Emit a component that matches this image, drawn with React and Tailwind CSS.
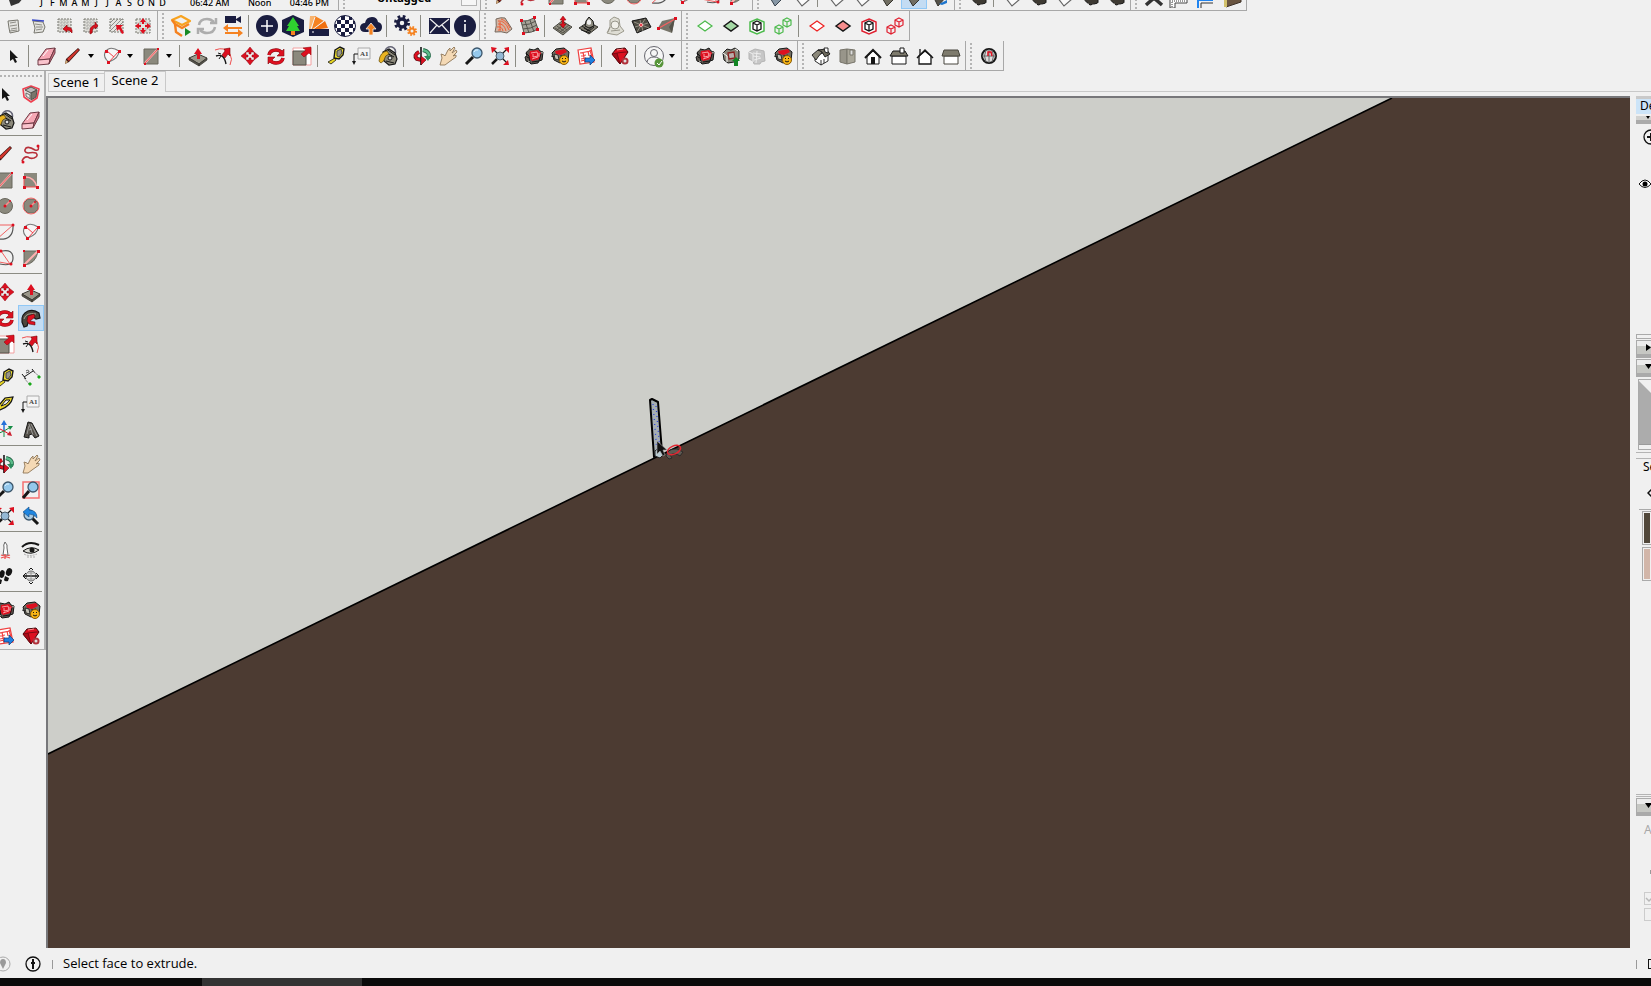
import clsx from 'clsx';

const RED = '#dd1020';
const INK = '#161616';
const STONE = '#8b897d';
const NAVY = '#1a1d40';
const ORANGE = '#f58220';
const GREEN = '#4cba4c';

const cubeLines = 'M12 7l4 2v6l-4 2-4-2V9zM8 9l4 2 4-2M12 11v6';

const smallCubes = (color) => (
  <g fill="none" stroke={color} strokeWidth="1.200">
    <path d="M8 11l4 2v5l-4 2-4-2v-5zM4 13l4 2 4-2M8 15v5" />
    <path d="M16 4l4 2v5l-4 2-4-2V6zM12 6l4 2 4-2M16 8v5" />
  </g>
);

const ruby = (
  <g>
    <path d="M4 9l3-4 5 1 4-2 2 3 3 1-1 8-3 1-1 2-7 1-2-2-3-1-1-4 2-1z" fill="#5c5750" stroke={INK} />
    <path d="M8 7l8-1 3 3-1 6-8 2-3-3z" fill={RED} />
    <path d="M9 9l6-1 1 4-5 1v-3M10 15l6-2M17 9v4" stroke="#ffc4c4" strokeWidth=".8" fill="none" />
    <path d="M4 9l3 3 1 7M10 18l7-1 2-7M5 13l2 1" stroke={INK} fill="none" />
    <path d="M5 7l2-2M19 8l2 1M6 17l2 1" stroke="#b5b2a8" fill="none" />
  </g>
);

const smiley = (
  <g>
    <circle cx="16" cy="16" r="4.500" fill="#f8b516" stroke="#8a5a00" />
    <path d="M14 17q2 2 4 0" fill="none" stroke={INK} />
    <path d="M14 14h1v1h-1zM17 14h1v1h-1z" fill={INK} />
  </g>
);

const icons = {
  page: (
    <g stroke="#77766e" fill="#e4e4e0">
      <path d="M7 7l10-1 1 11-9 2-1-5z" />
      <path d="M9 9l6-1M9 12l7-1M10 15l6-1M9 17l7-1" strokeWidth=".8" />
    </g>
  ),
  pageBlue: (
    <g stroke="#77766e" fill="#e4e4e0">
      <path d="M6 7l10 1 2 5-2 5-9 1 1-5z" />
      <path d="M8 10l7 1M9 13l7 0M9 16l6-1" strokeWidth=".8" />
      <path d="M5 6l12 1" stroke="#3848c8" strokeWidth="1.500" />
    </g>
  ),
  hatchLeft: (
    <g>
      <path d="M5 5h13v13H5z" fill="#ddddd7" stroke="#77766e" strokeDasharray="2 1" />
      <path d="M5 8h13M5 11h13M5 14h13M8 5v13M11 5v13M14 5v13" stroke="#999" strokeWidth=".7" strokeDasharray="2 1" />
      <path d="M19 19q1-6-5-6v-2l-4 4 4 3v-2q3 0 5 3z" fill={RED} stroke="#800" strokeWidth=".6" />
    </g>
  ),
  hatchRight: (
    <g>
      <path d="M5 5h13v13H5z" fill="#ddddd7" stroke="#77766e" strokeDasharray="2 1" />
      <path d="M5 8h13M5 11h13M5 14h13M8 5v13M11 5v13M14 5v13" stroke="#999" strokeWidth=".7" strokeDasharray="2 1" />
      <path d="M11 20q-1-8 5-9V8l3 4-3 3v-2q-3 1-3 6z" fill={RED} stroke="#800" strokeWidth=".6" />
    </g>
  ),
  hatchDiagonal: (
    <g>
      <path d="M5 5h13v13H5z" fill="#e6e6e1" stroke="#77766e" strokeDasharray="2 1" />
      <path d="M5 9l4-4M5 13l8-8M5 17l12-12M8 18L18 8" stroke="#777" strokeWidth=".8" />
      <path d="M17 20l-3-5-2 2-1-6h7l-2 2 3 6z" fill={RED} />
    </g>
  ),
  hatchOut: (
    <g>
      <path d="M5 5h14v14H5z" fill="#e6e6e1" stroke="#77766e" strokeDasharray="2 1" />
      <path d="M5 9h14M5 15h14M9 5v14M15 5v14" stroke="#aaa" strokeWidth=".7" />
      <path d="M12 4l3 4h-2v2h-2V8H9zM12 20l3-4h-2v-2h-2v2H9zM4 12l4-3v2h2v2H8v2zM20 12l-4-3v2h-2v2h2v2z" fill={RED} />
    </g>
  ),
  hexPlay: (
    <g>
      <path d="M3 6l9-4 9 5-8 4z" fill="none" stroke="#f7a21f" strokeWidth="2.200" strokeLinejoin="round" />
      <path d="M3 6l3 4 7 4 7-4M6 10l1 8 6 4" fill="none" stroke={ORANGE} strokeWidth="2.400" strokeLinejoin="round" />
      <path d="M16 14l6 4-6 4z" fill="#178a25" />
    </g>
  ),
  sync: (
    <g fill="none" stroke="#adadad" strokeWidth="2.500">
      <path d="M4 11q1-6 8-6 4 0 7 3M20 13q-1 6-8 6-4 0-7-3" />
      <path d="M21 4v5h-6M3 20v-5h6" />
    </g>
  ),
  cameraSwap: (
    <g>
      <path d="M4 2h11v7H4zM15 5l5-3v7l-5-3z" fill={NAVY} />
      <path d="M2 14l5-4v3h14v2H7v3zM22 19l-5-4v3H4v2h13v3z" fill={ORANGE} />
    </g>
  ),
  plusDisc: (
    <g>
      <circle cx="12" cy="12" r="11" fill={NAVY} />
      <path d="M12 6v12M6 12h12" stroke="#fff" strokeWidth="1.500" />
    </g>
  ),
  treeHex: (
    <g>
      <path d="M12 1l11 5v12l-11 5-11-5V6z" fill={NAVY} />
      <path d="M12 3l6 9h-2l3 5H5l3-5H6z" fill="#2fd22f" />
      <path d="M10 17h4v4h-4z" fill={ORANGE} />
    </g>
  ),
  swatches: (
    <g>
      <path d="M3 2h5l3 13H2z" fill="#f9b36d" />
      <path d="M8 2l9 5-12 9z" fill={ORANGE} />
      <path d="M18 7l3 7-16 2z" fill="#f07010" />
      <path d="M8 3l-4 12M17 7L5 16" stroke="#f0f0f0" />
      <path d="M2 15h20v7H2z" fill={NAVY} />
      <path d="M5 18h2" stroke="#fff" />
    </g>
  ),
  checkerBall: (
    <g>
      <circle cx="12" cy="12" r="10.500" fill="#fff" stroke={NAVY} />
      <path
        d="M8 2h4v4H8zM16 3h3v3h-3zM4 6h4v4H4zM12 6h4v4h-4zM8 10h4v4H8zM16 10h4v4h-4zM4 14h4v4H4zM12 14h4v4h-4zM8 18h4v4H8zM16 18h3v2h-3zM2 10h2v4H2zM20 7h2v3h-2zM20 14h2v3h-2z"
        fill={NAVY}
      />
    </g>
  ),
  cloudUp: (
    <g>
      <path d="M6 18q-5 0-5-5 1-4 5-4 1-6 7-6 5 0 6 5 4 1 4 5 0 5-5 5z" fill={NAVY} />
      <path d="M12 9l5 6h-3v6h-4v-6H7z" fill={ORANGE} stroke="#f0f0f0" strokeWidth=".8" />
    </g>
  ),
  gears: (
    <g fill="none">
      <circle cx="9" cy="9" r="4" stroke={NAVY} strokeWidth="3.500" />
      <circle cx="9" cy="9" r="6.500" stroke={NAVY} strokeWidth="3" strokeDasharray="2.600 2.500" />
      <circle cx="19" cy="17" r="2.500" stroke={ORANGE} strokeWidth="2" />
      <circle cx="19" cy="17" r="4" stroke={ORANGE} strokeWidth="2" strokeDasharray="1.600 1.540" />
    </g>
  ),
  mail: (
    <g>
      <path d="M2 4h21v16H2z" fill={NAVY} />
      <path d="M3 5l9 8 10-8M3 19l7-8M22 19l-7-8" fill="none" stroke="#f0f0f0" strokeWidth="1.200" />
    </g>
  ),
  infoDisc: (
    <g>
      <circle cx="12" cy="12" r="11" fill={NAVY} />
      <path d="M12 10v8M12 6v2" stroke="#fff" strokeWidth="1.600" />
    </g>
  ),
  contours: (
    <g>
      <path d="M5 5q5-2 9-1l7 11-5 4q-6-2-12-1 2-6 1-13z" fill="#d3b5a3" stroke="#76695e" />
      <path d="M7 7q7-1 11 9M7 10q6-1 8 7M6 13q5-1 6 4M10 5q6 2 9 9M7 16h3M9 8v8" fill="none" stroke="#f0562c" strokeWidth=".9" />
    </g>
  ),
  terrainGrid: (
    <g>
      <path d="M4 7q6 1 13-3l4 11q-6 4-14 4z" fill="#a5a398" stroke="#55544c" />
      <path d="M8 7l4 12M13 6l4 12M5 11q8 0 14-4M6 15q8 0 14-4" stroke="#55544c" fill="none" />
      <path d="M3 5h3v3H3zM16 2h3v3h-3zM5 18h3v3H5zM19 14h3v3h-3z" fill={RED} />
    </g>
  ),
  smoove: (
    <g>
      <path d="M2 14l9-7 10 6-9 8z" fill="#918e80" stroke="#47463f" />
      <path d="M4 14l8 5 7-6M6 12l8 6M8 10l8 6M15 9l-9 7M18 11l-9 7" fill="none" stroke="#47463f" strokeWidth=".8" />
      <path d="M12 2l3 4h-2v4h2l-3 4-3-4h2V6H9z" fill={RED} stroke="#800" strokeWidth=".5" />
    </g>
  ),
  stamp: (
    <g>
      <path d="M2 14l9-6 10 5-9 7z" fill="#7d7a6d" stroke="#35342e" />
      <path d="M7 14l5 3 5-4M4 16l9 3M5 12l9 6M17 11l-8 7" fill="none" stroke={INK} strokeWidth=".9" />
      <path d="M8 12l1-5 3-4 4 4 1 5-5 2z" fill="#8b897d" stroke={INK} />
      <path d="M10 10V7l2-2 2 2v3l-2 1z" fill="#eee" />
    </g>
  ),
  drape: (
    <g>
      <path d="M4 19l3-6V6l4-3 5 2 1 7 4 5-7 4-6-1z" fill="#deddd4" stroke="#9b998c" />
      <circle cx="12" cy="11" r="4" fill="#f0efe9" stroke="#98968a" />
      <path d="M8 17l9-1M7 13l-2 5" stroke="#98968a" />
    </g>
  ),
  addDetail: (
    <g>
      <path d="M3 7l14-3 5 9-14 6z" fill="#4e4b42" stroke={INK} />
      <path d="M5 8l15 6M8 18l8-13M6 13l13-4M11 6l3 11" stroke="#a5a294" strokeWidth=".8" />
      <circle cx="12" cy="11" r="1.500" fill={RED} stroke="#fbb" />
    </g>
  ),
  flipEdge: (
    <g>
      <path d="M7 7l13-3-3 15L3 14z" fill="#77756a" />
      <path d="M20 4l-3 15-3-6z" fill="#55534a" />
      <path d="M4 14L20 5" stroke="#f56060" strokeWidth="1.300" />
      <path d="M2 13h3v3H2zM19 3h3v3h-3z" fill={RED} />
    </g>
  ),
  diamondGreen: <path d="M5 12l7-5 7 5-7 5z" fill="#fff" stroke={GREEN} strokeWidth="1.200" />,
  diamondGreenFill: <path d="M5 12l7-5 7 5-7 5z" fill="#a4d8a4" stroke={INK} strokeWidth="1.500" />,
  cubeGreen: (
    <g fill="none">
      <path d="M12 5l7 3v9l-7 3-7-3V8z" stroke={GREEN} strokeWidth="1.500" fill="#fff" />
      <path d={cubeLines} stroke={INK} strokeWidth="1.300" />
    </g>
  ),
  cubesGreen: smallCubes(GREEN),
  diamondRed: <path d="M5 12l7-5 7 5-7 5z" fill="#fff" stroke="#ee2222" strokeWidth="1.200" />,
  diamondRedFill: <path d="M5 12l7-5 7 5-7 5z" fill="#f58d8d" stroke={INK} strokeWidth="1.500" />,
  cubeRed: (
    <g fill="none">
      <path d="M12 5l7 3v9l-7 3-7-3V8z" stroke="#e02030" strokeWidth="1.500" fill="#fff" />
      <path d={cubeLines} stroke={INK} strokeWidth="1.300" />
    </g>
  ),
  cubesRed: smallCubes('#e02030'),
  cursor: <path d="M9 6v11l3-2 2 4 2-1-2-4h3z" fill={INK} />,
  eraser: (
    <g strokeLinejoin="round">
      <path d="M3 16l8-11 9-1-5 11z" fill="#f6a8b5" stroke="#6e3a44" />
      <path d="M3 16l12-1-1 5-11 1z" fill="#f9c3cc" stroke="#6e3a44" />
      <path d="M15 15l5-11v5l-6 11z" fill="#cf7486" stroke="#6e3a44" />
      <path d="M8 12l5-6" stroke="#fff" />
    </g>
  ),
  pencil: (
    <g>
      <path d="M4 20l1-5L17 4l2 2L8 18z" fill="#3a1512" />
      <path d="M6 15L17 5l1 1L8 17z" fill="#d4352c" />
      <path d="M4 20l1-4 2 2z" fill="#d8b078" />
    </g>
  ),
  arc: (
    <g>
      <path d="M9 18Q3 14 5 8 10 1 19 7q0 7-10 11z" stroke="#777" strokeWidth="1.100" fill="#f6f6f6" />
      <path d="M9 18L19 7M7 7l7 6" stroke="#f04048" fill="none" />
      <path d="M18 6h3v3h-3zM7 17h3v3H7zM5 6h3v3H5z" fill={RED} />
    </g>
  ),
  rectangle: (
    <g>
      <path d="M5 5h14v15H5z" fill={STONE} stroke="#69675d" />
      <path d="M6 19L18 6" stroke="#ffb0b0" strokeWidth="2" />
      <path d="M6 19L18 6" stroke="#e04a4a" strokeWidth=".8" />
      <path d="M5 19h2v2H5zM18 4h2v2h-2z" fill={RED} />
    </g>
  ),
  pushPull: (
    <g>
      <path d="M3 14l9-4 9 4-8 6z" fill="#9a978a" stroke="#3c3b35" />
      <path d="M3 14v2l10 6v-2zM13 20v2l8-6v-2z" fill="#55534a" stroke="#33322c" strokeWidth=".7" />
      <path d="M12 4l4 6h-2v5h-3v-5H8z" fill={RED} />
    </g>
  ),
  offset: (
    <g fill="none">
      <path d="M3 6q10-4 15 4 3 5 0 11" stroke="#ef5050" />
      <path d="M4 12q8-3 10 8" stroke={INK} strokeWidth="1.400" />
      <path d="M6 9l3 1M9 12l-2 3" stroke={INK} />
      <path d="M18 4l-6 1 1 2-3 4 3 3 3-4 2 2z" fill={RED} stroke="#700" strokeWidth=".6" />
    </g>
  ),
  move: (
    <g fill={RED} stroke="#8d0b14" strokeWidth=".5">
      <path d="M12 3l4 5h-3v2h-2V8H8z" />
      <path d="M12 21l4-5h-3v-2h-2v2H8z" />
      <path d="M3 12l5-4v3h2v2H8v3z" />
      <path d="M21 12l-5-4v3h-2v2h2v3z" />
    </g>
  ),
  rotate: (
    <g>
      <path d="M5 11q1-5 7-5 4 0 6 3M19 14q-1 5-7 5-4 0-6-3" fill="none" stroke="#800d12" strokeWidth="3.600" />
      <path d="M20 5v7h-7zM4 20v-7h7z" fill={RED} stroke="#800d12" strokeWidth=".6" />
      <path d="M5 11q1-5 7-5 4 0 6 3M19 14q-1 5-7 5-4 0-6-3" fill="none" stroke={RED} strokeWidth="2.600" />
    </g>
  ),
  scale: (
    <g>
      <path d="M3 4h18v17H3z" fill="#fff" stroke="#f2a0a0" />
      <path d="M3 7h13v14H3z" fill={STONE} stroke="#55534a" />
      <path d="M21 3v8l-2-2-5 4-3-3 5-4-3-2z" fill={RED} stroke="#800" strokeWidth=".5" />
    </g>
  ),
  tape: (
    <g>
      <path d="M4 18l7-4 1 2-5 4z" fill="#e6d422" stroke={INK} strokeWidth=".8" />
      <path d="M11 6l5-3 4 2-1 6-4 4-5-1z" fill="#f1e02b" stroke={INK} strokeWidth="1.400" />
      <path d="M13 7l4-2 1 4-3 4-2-1z" fill="#98968a" stroke="#444" />
    </g>
  ),
  label: (
    <g>
      <path d="M8 4h12v11H8z" fill="#f5f5f5" stroke="#aaa" />
      <text x="10" y="12" fontSize="7" fontWeight="bold" fontFamily="Liberation Serif, serif" fill="#444">A1</text>
      <path d="M8 10H4v8" fill="none" stroke={INK} />
      <path d="M2 17h4l-2 4z" fill={INK} />
    </g>
  ),
  paint: (
    <g>
      <path d="M9 7q2-5 7-4 5 2 3 8" fill="none" stroke="#667" strokeWidth="1.500" />
      <path d="M7 8l6-3 6 4 2 6-2 5-6 1-5-4z" fill="#8c897b" stroke={INK} strokeWidth="1.200" />
      <path d="M9 8l9 5M12 6l7 5M10 17l8 2" stroke={INK} />
      <path d="M11 7q-7 1-8 10 2 4 5-1 1-5 5-6z" fill="#eab422" stroke="#5b4300" strokeWidth=".7" />
      <circle cx="14" cy="14" r="2" fill="#ddd" stroke={INK} />
    </g>
  ),
  orbit: (
    <g fill="none">
      <path d="M9 8q-6 3-2 7l5 1" stroke="#5a0c12" strokeWidth="4" />
      <path d="M9 8q-6 3-2 7l5 1" stroke={RED} strokeWidth="2.600" />
      <path d="M13 6q8 2 5 8" stroke="#1d5c3e" strokeWidth="4" />
      <path d="M13 6q8 2 5 8" stroke="#5bbd8b" strokeWidth="2.400" />
      <path d="M11 3v18" stroke={INK} strokeWidth="1.600" />
      <path d="M11 12l5 4-5 5z" fill={RED} stroke="#5a0c12" strokeWidth=".6" />
      <path d="M14 12h7l-3 5z" fill="#2b8c5c" />
    </g>
  ),
  hand: (
    <path
      d="M4 21l2-7-1-4 3 1 1 1 3-6 2-2v3l4-4 1 1-3 5 4-3 1 2-4 4 3-1v2l-7 5-4 3z"
      fill="#f4d9b5"
      stroke="#8f7657"
      strokeWidth=".9"
      strokeLinejoin="round"
    />
  ),
  zoom: (
    <g>
      <path d="M4 20l7-7" stroke={INK} strokeWidth="3" />
      <circle cx="15" cy="9" r="5" fill="#94c8ec" stroke="#3c566b" strokeWidth="1.300" />
      <path d="M12 8q1-3 4-2" stroke="#e5f5ff" fill="none" />
    </g>
  ),
  zoomExtents: (
    <g>
      <path d="M5 5l5 5M19 5l-5 5M19 19l-4-4" stroke={INK} strokeWidth="1.200" />
      <path d="M4 20l5-5" stroke={INK} strokeWidth="2.500" />
      <circle cx="12" cy="12" r="4" fill="#94b8d4" stroke="#4d5d6b" />
      <path d="M3 3l6 1-5 5zM21 3v6l-5-5zM21 21h-6l5-5z" fill={RED} />
    </g>
  ),
  zoomWindow: (
    <g>
      <path d="M4 4h16v16H4z" fill="none" stroke="#f47070" strokeWidth="1.500" />
      <path d="M4 20l6-7" stroke={INK} strokeWidth="3" />
      <circle cx="14" cy="9" r="5" fill="#94c8ec" stroke="#3c566b" strokeWidth="1.300" />
    </g>
  ),
  zoomPrevious: (
    <g>
      <path d="M13 14l6 6" stroke={INK} strokeWidth="3" />
      <circle cx="10" cy="11" r="5" fill="#a9cbe2" stroke="#3c566b" strokeWidth="1.300" />
      <path d="M4 8l6-5v3q8 0 8 8-3-4-8-4v3z" fill="#1f86e0" stroke="#104a85" strokeWidth=".6" />
    </g>
  ),
  ruby,
  rubySmile: (
    <g>
      <path d="M4 9l4-4 8-1 5 4-1 8-8 3-6-3z" fill="#716d62" stroke={INK} />
      <path d="M7 7l10-2 2 3-6 3-5-1z" fill={RED} />
      <path d="M6 10l4 1 1 5-4-1zM3 12l3 1M12 12l5-1" fill="#c4c1b6" stroke={INK} strokeWidth=".8" />
      {smiley}
    </g>
  ),
  layoutSend: (
    <g>
      <path d="M4 6l13-2 3 14-14 2z" fill="#fff" stroke="#ef4040" strokeWidth="1.200" />
      <path d="M6 9l11-2M7 12l5-1M7 15l5-1M9 8l2 11M14 7l1 5M16 6l2 7M7 17l4-1" stroke="#ef4040" strokeWidth="1.200" />
      <path d="M11 14h5v-3l5 5-5 5v-3h-5z" fill="#1f7fe0" stroke="#0d3a77" strokeWidth=".7" />
    </g>
  ),
  gem: (
    <g>
      <path d="M4 10l4-5 9-1 3 4-8 12z" fill={RED} stroke="#3d0508" />
      <path d="M4 10l5-1 3 11zM9 9l8-1 3 0" stroke="#6a0810" strokeWidth=".8" fill="#a80c18" />
      <path d="M9 6l6-1" stroke="#ff8b8b" />
      <circle cx="17" cy="17" r="2.500" fill="#ddd" stroke="#b1303a" strokeWidth="2" />
    </g>
  ),
  account: (
    <g>
      <circle cx="12" cy="12" r="9.500" fill="#f6f6f6" stroke="#66666e" />
      <circle cx="12" cy="9" r="3.500" fill="none" stroke="#66666e" />
      <path d="M5 18q1-5 7-5t7 5" fill="none" stroke="#66666e" />
      <circle cx="17" cy="19" r="4.500" fill="#57953a" />
      <path d="M15 19l2 2 3-4" stroke="#fff" fill="none" />
    </g>
  ),
  rubyUp: (
    <g>
      <path d="M4 9l4-4 4 1 4-2 4 3v8l-5 3-6 1-4-3z" fill="#8b877b" stroke={INK} />
      <path d="M9 9l6-1 1 6-6 1z" fill="#b9adab" stroke="#8a2020" strokeWidth="1.300" />
      <path d="M4 9l4 3v6M16 5l3 2" stroke="#fff" fill="none" />
      <path d="M17 13l4 4h-2v5h-4v-5h-2z" fill="#118522" />
    </g>
  ),
  rubyOff: (
    <g fill="#c6c6c6" stroke="#b4b4b4">
      <path d="M4 8l6-3 9 2 1 10-4 1-1 2-6 0-1-3-4-2z" />
      <path d="M8 9l8 1M8 12l7 1M9 16l7-2M12 7l-1 12M4 8l4 2v8" stroke="#eee" fill="none" />
    </g>
  ),
  isoHouse: (
    <g stroke={INK} strokeWidth=".9">
      <path d="M6 12v5l6 4 7-4v-6l-5-2z" fill="#fff" />
      <path d="M3 11l6-5 5 1-5 6-2 3z" fill="#8a8779" />
      <path d="M9 6l8-1 4 5-5 3-3-5z" fill="#6c695c" />
      <path d="M15 4h4v5l-3-1z" fill="#fff" />
      <path d="M12 16v5M15 15v4" fill="none" />
    </g>
  ),
  topHouse: (
    <g stroke="#77746a">
      <path d="M5 6l7-1v15l-7-2z" fill="#98958a" />
      <path d="M12 5l8 1v12l-8 2z" fill="#aaa79a" />
      <path d="M15 6h3v5h-3z" fill="#ddd" />
    </g>
  ),
  frontHouse: (
    <g>
      <path d="M6 12v8h12v-8l-6-5z" fill="#fff" stroke={INK} />
      <path d="M4 14l8-8 8 8" fill="none" stroke={INK} strokeWidth="2" />
      <path d="M10 13h4v7h-4z" fill={INK} />
    </g>
  ),
  rightHouse: (
    <g stroke={INK}>
      <path d="M5 12h14v8H5z" fill="#fff" />
      <path d="M6 7h12l3 5H3z" fill="#7e7b6d" />
      <path d="M13 4h4v5h-4z" fill="#fff" />
    </g>
  ),
  backHouse: (
    <g>
      <path d="M7 5v6" stroke={INK} strokeWidth="1.300" />
      <path d="M6 12v8h12v-8l-6-5z" fill="#fff" stroke={INK} strokeWidth="1.300" />
      <path d="M4 14l8-8 8 8" fill="none" stroke={INK} strokeWidth="1.500" />
    </g>
  ),
  leftHouse: (
    <g stroke="#47453c">
      <path d="M5 12h14v8H5z" fill="#fff" />
      <path d="M5 6h14l2 6H3z" fill="#7e7b6d" />
    </g>
  ),
  globe: (
    <g>
      <circle cx="12" cy="12" r="7" fill="#ddd" stroke={INK} strokeWidth="2" />
      <path d="M5 12h14M12 5v14M9 6q-3 6 0 12M15 6q3 6 0 12" stroke="#666" fill="none" />
      <path d="M11 12V8h3l1 4" stroke={RED} strokeWidth="1.500" fill="none" />
    </g>
  ),
  component: (
    <g>
      <path d="M4 7l8-3 8 3-2 9-6 4-7-5z" fill="#ddd" stroke="#f04050" strokeWidth="1.600" strokeLinejoin="round" />
      <path d="M6 8l6 3 6-3-6-3z" fill="#bbb" stroke="#55534c" />
      <path d="M12 11v7l5-3 1-7z" fill="#79766b" stroke="#55534c" />
      <path d="M7 11l4 2v4l-4-3z" fill="#e8e8e8" stroke="#55534c" strokeWidth=".8" />
    </g>
  ),
  freehand: (
    <g>
      <path d="M19 4q2 5-3 4-6-4-9-2-3 4 2 5 5-1 8 0 3 3-2 5-4 1-6-1-4-1-6 4" fill="none" stroke="#b8303a" strokeWidth="1.600" />
      <circle cx="19" cy="4" r="1.500" fill={RED} />
      <circle cx="4" cy="20" r="1.500" fill={RED} />
    </g>
  ),
  rotatedRectangle: (
    <g>
      <path d="M5 5h13v14H5z" fill={STONE} />
      <path d="M5 9q10-1 13 10" fill="none" stroke="#ffb0b0" strokeWidth="1.500" />
      <path d="M5 9v10h13" stroke="#f05050" fill="none" />
      <path d="M4 8h3v3H4zM4 18h3v3H4zM17 18h3v3h-3z" fill={RED} />
    </g>
  ),
  circle: (
    <g>
      <circle cx="12" cy="12" r="7.500" fill={STONE} stroke="#69675d" />
      <path d="M12 12l5-5" stroke="#ff8b8b" strokeWidth="1.500" />
      <circle cx="12" cy="12" r="1.500" fill={RED} />
      <circle cx="17" cy="7" r="1" fill={RED} />
    </g>
  ),
  polygon: (
    <g>
      <path d="M9 5h6l4 4v6l-4 4H9l-4-4V9z" fill={STONE} stroke="#69675d" />
      <circle cx="12" cy="12" r="8" fill="none" stroke="#f46a6a" />
      <path d="M12 12l4-4" stroke="#ff8b8b" strokeWidth="1.500" />
      <circle cx="12" cy="12" r="1.500" fill={RED} />
      <circle cx="16" cy="8" r="1" fill={RED} />
    </g>
  ),
  twoPointArc: (
    <g fill="none">
      <path d="M4 19q17 2 16-14" stroke="#555" strokeWidth="1.200" />
      <path d="M3 5h17L4 19" stroke="#f06060" />
      <circle cx="20" cy="5" r="1.500" fill={RED} />
    </g>
  ),
  threePointArc: (
    <g fill="none">
      <path d="M9 5q11-2 11 7t-13 6" stroke="#555" strokeWidth="1.200" />
      <path d="M8 5l9 13-16-3" stroke="#f06060" />
      <circle cx="8" cy="5" r="1.500" fill={RED} />
      <circle cx="18" cy="18" r="1.500" fill={RED} />
    </g>
  ),
  pie: (
    <g>
      <path d="M5 5h14q-2 13-14 14z" fill={STONE} stroke="#69675d" />
      <path d="M5 19L19 5" stroke="#ffb0b0" strokeWidth="2" />
      <path d="M4 18h3v3H4zM4 4h2v2H4zM18 4h3v3h-3z" fill={RED} />
    </g>
  ),
  followMe: (
    <g>
      <path d="M3 16q-1-8 6-11 6-2 11 2l1 5-4 1q-5-4-7 1l-2 6-3 1z" fill="#4b463e" stroke={INK} strokeWidth="1.200" />
      <path d="M5 13q2-7 12-5M9 16l2-4" fill="none" stroke="#a6a191" />
      <path d="M9 10l6-2 1 3-5 4 5 1v3l-6-1-2-3z" fill={RED} stroke="#500" strokeWidth=".5" />
    </g>
  ),
  dimension: (
    <g fill="none" stroke={INK}>
      <path d="M5 11l9-6M3 8l4 5M13 3l3 4" />
      <path d="M5 12l6 7M15 6l6 5" stroke="#777" strokeDasharray="2 1" />
      <path d="M7 5q3-2 3 1l-3 1" stroke="#555" />
      <path d="M10 17h2v2h-2zM19 10h2v2h-2z" fill="#18a818" stroke="#18a818" />
    </g>
  ),
  protractor: (
    <g>
      <path d="M2 18L12 6l8-1q-2 9-13 13l-5 3z" fill="#e9d527" stroke={INK} strokeWidth="1.200" />
      <path d="M8 14l5-6h4q-3 5-9 6z" fill="#f0f0f0" stroke={INK} />
    </g>
  ),
  axes: (
    <g>
      <path d="M11 13V6" stroke="#2470d8" strokeWidth="1.500" />
      <path d="M8 7l3-5 3 5z" fill="#2470d8" />
      <path d="M11 13l5-3M4 16l7-3M11 13v6" stroke="#158c45" />
      <path d="M11 13l5 3M5 10l6 3" stroke={RED} />
      <path d="M19 18l-5-1 3-4z" fill="#cc2130" />
      <path d="M20 8l-5 0 2 4z" fill="#158c45" />
    </g>
  ),
  letterA: (
    <g>
      <path d="M5 19l4-15 4 1 7 13-4 2-3-4-3 1v3z" fill="#55514a" stroke={INK} />
      <path d="M10 6l4 11M12 6l6 12M8 16l2-8M10 12l3-1" stroke="#aaa" strokeWidth=".8" fill="none" />
    </g>
  ),
  positionCamera: (
    <g>
      <path d="M12 4q3 3 2 6l1 7h-5l1-7q-1-3 1-6z" fill="#fff" stroke="#666" />
      <path d="M8 20l9-3M8 17l9 3M12 16v5" stroke="#ef5050" strokeWidth="1.300" />
    </g>
  ),
  lookAround: (
    <g>
      <path d="M3 9q7-7 17-2" stroke={INK} strokeWidth="2" fill="none" />
      <path d="M4 13q8-6 16-1-8 6-16 1z" fill="#d8d8d2" stroke={INK} />
      <circle cx="13" cy="12" r="2.500" fill={INK} />
      <path d="M5 16q5 3 13 0M8 19h8" stroke="#aaa" strokeDasharray="2 1" fill="none" />
    </g>
  ),
  walk: (
    <g fill={INK}>
      <ellipse cx="16" cy="8" rx="3" ry="4" transform="rotate(20 16 8)" />
      <path d="M12 12l4 2-1 3q-3 1-4-1z" />
      <ellipse cx="9" cy="10" rx="2.500" ry="4" transform="rotate(15 9 10)" />
      <path d="M6 15l3 1-1 4q-3 0-3-2z" />
    </g>
  ),
  sectionPlane: (
    <g fill="none" stroke={INK}>
      <circle cx="12" cy="12" r="5" stroke="#666" fill="#eee" />
      <path d="M4 12h16" strokeWidth="1.500" />
      <path d="M12 7v10M9 9h6M9 15h6" stroke="#888" strokeWidth=".8" />
      <path d="M10 6l2-2 2 2M10 18l2 2 2-2M17 9l3 3-3 3M7 9l-3 3 3 3" />
    </g>
  ),
  solid: <path d="M5 12l10-8 5 9-9 9z" fill="#716e62" stroke="#35332c" />,
  solidBlue: (
    <g>
      <path d="M5 12l10-8 3 9-8 9z" fill="#56534a" stroke="#35332c" />
      <path d="M11 20l8-4v3l-5 2z" fill="#1f76cd" />
    </g>
  ),
  wireSolid: <path d="M5 13l9-6 6 8-8 7z" fill="#fafafa" stroke="#666" strokeWidth="1.200" />,
  glassSolid: <path d="M5 12l10-8 5 9-9 9z" fill="#8797a5" stroke="#35404a" />,
  darkSolid: <path d="M4 14l16-3v8l-8 2z" fill="#3e3a33" stroke={INK} strokeDasharray="4 1" />,
  cross: <path d="M4 21l8-7 8 7M5 6l7 8 7-8" stroke="#333" strokeWidth="3.500" fill="none" />,
  ruler: (
    <g>
      <path d="M2 15h17v4H7v5H2z" fill="#fff" stroke="#444" />
      <path d="M4 17h14M4 18v5" stroke="#333" strokeDasharray="1 1" />
    </g>
  ),
  rulerBlue: (
    <g fill="none">
      <path d="M4 24v-8h15" stroke="#2084f0" strokeWidth="2" />
      <path d="M7 24v-5h12" stroke="#333" />
    </g>
  ),
  board: (
    <g>
      <path d="M4 10l17 2v6L6 23z" fill="#6a5541" stroke="#3c3027" />
      <path d="M4 10h3v13H4z" fill="#d3c26c" />
    </g>
  ),
};

const styleTools = ['glassSolid', 'wireSolid', '|', 'wireSolid', 'wireSolid', 'solid', '*solid', 'solidBlue'];
const drawTools = ['pencil', 'freehand', 'rectangle', 'rotatedRectangle', 'circle', 'polygon', 'twoPointArc', 'arc', 'threePointArc', 'pie'];

const middleRow = [
  { name: 'Textures', items: ['page', 'pageBlue', 'hatchLeft', 'hatchRight', 'hatchDiagonal', 'hatchOut'], noGrip: true },
  {
    name: 'Render',
    items: ['hexPlay', 'sync', 'cameraSwap', '|', 'plusDisc', 'treeHex', 'swatches', 'checkerBall', 'cloudUp', '|', 'gears', '|', 'mail', 'infoDisc'],
  },
  { name: 'Sandbox', items: ['contours', 'terrainGrid', '|', 'smoove', 'stamp', 'drape', 'addDetail', 'flipEdge'] },
  {
    name: 'Selection',
    items: ['diamondGreen', 'diamondGreenFill', 'cubeGreen', 'cubesGreen', '|', 'diamondRed', 'diamondRedFill', 'cubeRed', 'cubesRed'],
  },
];

const lowerRow = [
  {
    name: 'Getting started',
    noGrip: true,
    items: [
      'cursor', '|', 'eraser', 'pencil', 'v', 'arc', 'v', 'rectangle', 'v', '|',
      'pushPull', 'offset', 'move', 'rotate', 'scale', '|', 'tape', 'label', 'paint', '|',
      'orbit', 'hand', 'zoom', 'zoomExtents', '|', 'ruby', 'rubySmile', 'layoutSend', '|', 'gem', '|', 'account', 'v',
    ],
  },
  { name: 'Warehouse', items: ['ruby', 'rubyUp', 'rubyOff', 'rubySmile'] },
  { name: 'Views', items: ['isoHouse', 'topHouse', 'frontHouse', 'rightHouse', 'backHouse', 'leftHouse'] },
  { name: 'Location', items: ['globe'] },
];

const sideGroups = [
  ['cursor', 'component', 'paint', 'eraser'],
  ['pencil', 'freehand', 'rectangle', 'rotatedRectangle', 'circle', 'polygon', 'twoPointArc', 'arc', 'threePointArc', 'pie'],
  ['move', 'pushPull', 'rotate', '*followMe', 'scale', 'offset'],
  ['tape', 'dimension', 'protractor', 'label', 'axes', 'letterA'],
  ['orbit', 'hand', 'zoom', 'zoomWindow', 'zoomExtents', 'zoomPrevious'],
  ['positionCamera', 'lookAround', 'walk', 'sectionPlane'],
  ['ruby', 'rubySmile', 'layoutSend', 'gem'],
];

const ToolButton = ({ id }) => {
  const active = id.startsWith('*');
  const name = active ? id.slice(1) : id;
  return (
    <button
      type="button"
      aria-label={name}
      className={clsx(
        'flex size-[26px] flex-none items-center justify-center border',
        active ? 'border-[#90c8f6] bg-[#c3dcf3]' : 'border-transparent'
      )}
    >
      <svg viewBox="0 0 24 24" className="size-6 flex-none">{icons[name]}</svg>
    </button>
  );
};

const ToolItem = ({ id }) => {
  if (id === '|') {
    return <div className="flex w-2 flex-none pl-0.5"><div className="h-[22px] w-px bg-[#8c8c84]" /></div>;
  }
  if (id === 'v') {
    return (
      <button type="button" aria-label="More" className="flex h-[26px] w-[13px] flex-none items-center pl-0.5">
        <svg viewBox="0 0 6 4" className="h-1 w-1.5"><path d="M0 0h6L3 4z" /></svg>
      </button>
    );
  }
  return <ToolButton id={id} />;
};

const Toolbar = ({ name, items = [], noGrip, children }) => (
  <div role="toolbar" aria-label={name} className="flex h-[30px] flex-none items-center border-r border-b border-[#a8a8a8] pr-px">
    {!noGrip && (
      <div className="flex w-2.5 flex-none justify-center">
        <div className="h-[26px] border-l-2 border-dotted border-[#b4b4b4]" />
      </div>
    )}
    {children}
    {items.map((id, index) => <ToolItem key={index} id={id} />)}
  </div>
);

const TopRow = () => (
  <div className="flex h-[11px] flex-none items-end overflow-hidden">
    <Toolbar name="Shadows" noGrip>
      <div className="flex h-full w-[337px] items-end pb-px text-[9px] leading-[12px] font-medium">
        <div className="w-9 flex-none pb-0.5 pl-2">
          <svg viewBox="0 0 16 12" className="h-3 w-4"><path d="M0 2h16l-5 6-8 3z" fill="#333" /></svg>
        </div>
        <div className="grid w-[132px] flex-none grid-cols-12 text-center">
          {'JFMAMJJASOND'.split('').map((month, index) => <span key={index}>{month}</span>)}
        </div>
        <div className="flex w-[161px] flex-none justify-between pl-[22px]">
          <span>06:42 AM</span>
          <span>Noon</span>
          <span>04:46 PM</span>
        </div>
      </div>
    </Toolbar>
    <Toolbar name="Tags">
      <div className="flex h-full w-[130px] items-end pb-1 pl-7">
        <select aria-label="Tag" className="h-4 w-[84px] flex-none appearance-none text-[11px] leading-4 font-bold">
          <option>Untagged</option>
        </select>
        <div className="size-4 border border-[#b4b4b4] bg-[#f6f6f6]" />
      </div>
    </Toolbar>
    <Toolbar name="Drawing" items={drawTools} />
    <Toolbar name="Styles" items={styleTools} />
    <Toolbar name="Sections" items={['darkSolid', '|', 'wireSolid', 'darkSolid', 'wireSolid', 'darkSolid', 'darkSolid']} />
    <Toolbar name="Measure" items={['cross', 'ruler', 'rulerBlue', 'board']} />
  </div>
);

const SidePalette = () => (
  <aside className="w-[46px] flex-none overflow-hidden">
    <div className="border-r-2 border-b border-[#b0b0b0]">
      <div className="h-2.5 pt-1 pr-0.5">
        <div className="border-t-2 border-dotted border-[#b4b4b4]" />
      </div>
      {sideGroups.map((group, index) => (
        <div key={index}>
          {index > 0 && <div className="h-2 pt-0.5 pr-0.5"><div className="h-px bg-[#8c8c84]" /></div>}
          <div className="flex justify-end">
            <div className="grid flex-none grid-cols-2">
              {group.map((id) => <ToolButton key={id} id={id} />)}
            </div>
          </div>
        </div>
      ))}
    </div>
  </aside>
);

const Viewport = () => (
  <main className="min-w-0 flex-1 overflow-hidden border-t-2 border-l-2 border-[#77777a] bg-[#4c3b32]">
    <svg viewBox="0 0 1582 850" preserveAspectRatio="xMinYMin slice" className="block size-full">
      <path d="M0 0h1344L0 656z" fill="#cdcec9" />
      <path d="M0 656L1344 0" stroke="#000" strokeWidth="1.600" />
      <path d="M602 302l2-1 6 3 4 50-8 5z" fill="#a5aeb2" stroke="#000" strokeWidth="2" strokeLinejoin="round" />
      <path d="M605 306l4 48M608 308l4 44" stroke="#2d42dd" strokeWidth="1.200" strokeDasharray="1 4" />
      <path d="M607 353q5-6 8 4l-3 3-5-2z" fill="#b9cbd2" stroke="#222" />
      <path d="M609 343v13l3-3 3 5 2-1-2-5h4z" fill="#111" stroke="#aaa" strokeWidth=".6" />
      <path d="M618 358q2-8 11-7l6 3-3 4q-5-4-10-1l2 3-3 1z" fill="#5e5952" stroke="#222" strokeWidth=".8" />
      <ellipse cx="626" cy="352" rx="7" ry="4" transform="rotate(-25 626 352)" fill="none" stroke="#e12732" strokeWidth="1.500" />
    </svg>
  </main>
);

const TrayHeader = ({ open }) => (
  <button
    type="button"
    aria-label={open ? 'Collapse' : 'Expand'}
    className="mt-px flex h-[18px] w-full flex-none items-center border-t border-b-4 border-l border-[#aaa] bg-linear-to-b from-[#ececec] from-40% to-[#c6c7c3] to-40% pl-2"
  >
    <svg viewBox="0 0 7 7" className="size-[7px] flex-none">
      <path d={open ? 'M0 1h7L3.500 6z' : 'M1 0l5 3.500L1 7z'} />
    </svg>
  </button>
);

const Tray = () => (
  <aside className="ml-1.5 flex w-[15px] flex-none flex-col overflow-hidden text-xs whitespace-nowrap">
    <div className="h-[18px] flex-none border-t-3 border-[#c9c9c9] bg-[#cce4f8] pl-1 leading-[14px]">Default Tray</div>
    <div className="mt-0.5 h-2 flex-none border-b-4 border-[#aaa] bg-[#d2d2d0] pl-2.5">
      <svg viewBox="0 0 4 3" className="block h-[3px] w-1"><path d="M0 0h4L2 3z" /></svg>
    </div>
    <button type="button" aria-label="Add tag" className="mt-[5px] ml-[7px] flex-none">
      <svg viewBox="0 0 16 16" className="block size-4">
        <circle cx="8" cy="8" r="7" fill="none" stroke="#111" strokeWidth="1.300" />
        <path d="M8 4v8M4 8h8" stroke="#111" strokeWidth="2" />
      </svg>
    </button>
    <button type="button" aria-label="Visible" className="mt-[34px] ml-[3px] flex-none">
      <svg viewBox="0 0 12 10" className="block h-2.5 w-3">
        <path d="M0 5q6-8 12 0-6 7-12 0z" fill="#fff" stroke="#111" />
        <circle cx="6" cy="5" r="2.500" />
      </svg>
    </button>
    <div className="mt-[145px] h-[5px] flex-none border border-r-0 border-[#aaa]" />
    <TrayHeader />
    <TrayHeader open />
    <div className="mt-0.5 ml-0.5 h-[71px] flex-none border border-r-0 border-[#aaa] pb-1">
      <svg viewBox="0 0 12 65" preserveAspectRatio="none" className="block size-full">
        <path d="M0 1l12 12v52H0z" fill="#acacac" />
        <path d="M0 65h12" stroke="#888" />
      </svg>
    </div>
    <div className="mt-0.5 h-[7px] flex-none border-y border-[#b4b4b4]" />
    <div className="pl-[7px] leading-4">Select</div>
    <button type="button" aria-label="Back" className="mt-3.5 ml-[11px] flex-none">
      <svg viewBox="0 0 8 8" className="block size-2"><path d="M5 0L1 4l4 4" fill="none" stroke="#111" strokeWidth="1.500" /></svg>
    </button>
    <div className="mt-3 ml-[3px] h-px flex-none bg-[#aaa]" />
    <div className="mt-px ml-1.5 h-[34px] flex-none border border-r-0 border-[#aaa] p-px"><div className="h-full bg-[#51473a]" /></div>
    <div className="mt-0.5 ml-1.5 h-[34px] flex-none border border-r-0 border-[#aaa] p-px"><div className="h-full bg-[#d2b6a9]" /></div>
    <div className="min-h-0 flex-1" />
    <div className="h-[3px] flex-none border-y border-[#b4b4b4]" />
    <TrayHeader open />
    <div className="mt-1.5 pl-2 leading-4 text-[#a8a8a8]">Angle</div>
    <div className="mt-8 ml-3.5 h-1 w-px flex-none bg-[#999]" />
    <label className="relative mt-[18px] ml-2 block size-[13px] flex-none">
      <input type="checkbox" aria-label="Soften coplanar" defaultChecked disabled className="block size-[13px] appearance-none border border-[#ccc]" />
      <svg viewBox="0 0 13 13" className="absolute inset-0 size-[13px]"><path d="M2 6l3 3 5-5" fill="none" stroke="#b8b8b8" strokeWidth="1.500" /></svg>
    </label>
    <input type="checkbox" aria-label="Smooth normals" disabled className="mt-[3px] mb-[27px] ml-2 size-[13px] flex-none appearance-none border border-[#ccc]" />
  </aside>
);

const StatusBar = () => (
  <footer className="flex h-[30px] flex-none items-center overflow-hidden pt-0.5 font-['Open_Sans','Noto_Sans',sans-serif] text-[13px]">
    <div className="flex w-[43px] flex-none justify-end gap-3.5">
      <svg viewBox="0 0 16 16" className="size-4 flex-none">
        <circle cx="8" cy="8" r="7" fill="none" stroke="#aaa" />
        <path d="M8 13l-3-6q0-4 3-4t3 4z" fill="#999" />
      </svg>
      <svg viewBox="0 0 16 16" className="mr-0.5 size-4 flex-none">
        <circle cx="8" cy="8" r="7" fill="none" stroke="#111" strokeWidth="1.300" />
        <path d="M8 3v3M6 7h4M8 7v6" stroke="#111" strokeWidth="2" />
      </svg>
    </div>
    <div className="ml-[9px] h-[9px] w-px bg-[#999]" />
    <p className="flex-1 pl-2.5">Select face to extrude.</p>
    <div className="h-[9px] w-px bg-[#999]" />
    <div className="ml-[11px] h-2.5 w-[3px] flex-none border border-r-0 border-[#111]" />
  </footer>
);

const App = () => (
  <div className="flex h-screen flex-col overflow-hidden bg-[#f0f0f0] font-['Noto_Sans','Open_Sans',sans-serif] text-black">
    <div className="flex-none">
      <TopRow />
      <div className="flex">
        {middleRow.map((bar) => <Toolbar key={bar.name} {...bar} />)}
      </div>
      <div className="flex">
        {lowerRow.map((bar) => <Toolbar key={bar.name} {...bar} />)}
      </div>
    </div>
    <div className="flex min-h-0 flex-1">
      <SidePalette />
      <div className="flex min-w-0 flex-1 flex-col">
        <div role="tablist" className="flex h-[21px] flex-none items-end pl-0.5 text-[13px]">
          <button type="button" role="tab" aria-selected="false" className="h-[19px] w-14 flex-none border border-r-0 border-[#c9c9c9] leading-[17px]">Scene 1</button>
          <button type="button" role="tab" aria-selected="true" className="h-[21px] w-[62px] flex-none border border-b-0 border-[#c9c9c9] pb-1 leading-4">Scene 2</button>
          <div className="h-px flex-1 bg-[#c9c9c9]" />
        </div>
        <div className="mt-1 flex min-h-0 flex-1">
          <Viewport />
          <Tray />
        </div>
      </div>
    </div>
    <StatusBar />
    <div className="flex h-2 flex-none bg-[#0a0a0a]">
      <div className="ml-[202px] w-40 bg-[#333]" />
    </div>
  </div>
);

export default App;
